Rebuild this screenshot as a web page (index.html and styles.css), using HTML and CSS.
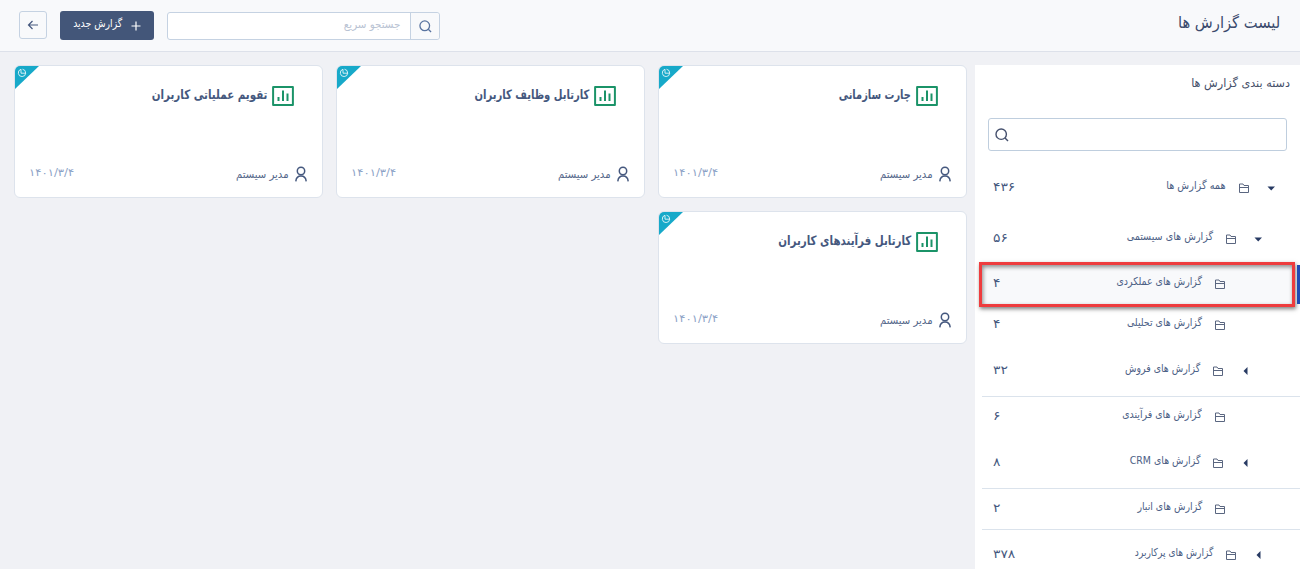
FILE: index.html
```html
<!DOCTYPE html>
<html lang="fa" dir="rtl">
<head>
<meta charset="utf-8">
<title>لیست گزارش ها</title>
<link rel="stylesheet" href="styles.css">
</head>
<body>
<svg width="0" height="0" class="defs">
  <symbol id="folder" viewBox="0 0 10 10"><path d="M.5 9.500V1h3.500l1 1.500h4.500v7zM.5 4.500h9" fill="none" stroke="currentColor" stroke-width="1"/></symbol>
  <symbol id="search" viewBox="0 0 14 14"><circle cx="6.2" cy="6.2" r="5.2" fill="none" stroke="currentColor" stroke-width="1.4"/><path d="M10 10l3 3" stroke="currentColor" stroke-width="1.4"/></symbol>
  <symbol id="down" viewBox="0 0 10 10"><path d="M1.500 3.500h7.500L5.200 7.500z" fill="currentColor"/></symbol>
  <symbol id="left" viewBox="0 0 10 10"><path d="M7.500 1v8L3.500 5z" fill="currentColor"/></symbol>
  <symbol id="chart" viewBox="0 0 22 20"><path d="M1.100 1.100h19.800v17.800H1.100z" fill="none" stroke="currentColor" stroke-width="2" stroke-linejoin="round"/><path d="M6.500 11v4M11 4.500v10.500M15.500 7.500v7.500" stroke="currentColor" stroke-width="2"/></symbol>
  <symbol id="user" viewBox="0 0 12 16"><circle cx="6" cy="5" r="3.700" fill="none" stroke="currentColor" stroke-width="1.500"/><path d="M.8 15.300C1.200 11.500 3.200 10 6 10s4.800 1.500 5.200 5.300" fill="none" stroke="currentColor" stroke-width="1.500"/></symbol>
  <symbol id="pie" viewBox="0 0 10 10"><path d="M4 1.300A3.700 3.700 0 1 0 8.700 5.200M4 1.300V5.200H8.700A3.900 3.900 0 0 0 5.500 1.200" fill="none" stroke="currentColor" stroke-width=".8"/></symbol>
</svg>
<header class="topbar">
  <h1 class="title">لیست گزارش ها</h1>
  <div class="tools">
    <div class="quick"><span class="quick-btn"><svg width="13" height="13"><use href="#search"/></svg></span><span class="quick-text">جستجو سریع</span></div>
    <div class="new"><svg width="10" height="10" viewBox="0 0 10 10"><path d="M5 .5v9M.5 5h9" stroke="#fff" stroke-width="1.200"/></svg><span>گزارش جدید</span></div>
    <div class="back"><svg width="12" height="10" viewBox="0 0 12 10"><path d="M11 5H1.500M5.500 1l-4 4 4 4" fill="none" stroke="currentColor" stroke-width="1.200"/></svg></div>
  </div>
</header>
<div class="main">
  <aside class="side">
    <h2 class="side-title">دسته بندی گزارش ها</h2>
    <div class="side-search"><svg width="14" height="14"><use href="#search"/></svg></div>
    <div class="tree">
      <div class="row tall l1"><svg class="caret"><use href="#down"/></svg><svg class="folder"><use href="#folder"/></svg><span class="name n1">همه گزارش ها</span><span class="count">۴۳۶</span></div>
      <div class="row tall l2"><svg class="caret"><use href="#down"/></svg><svg class="folder"><use href="#folder"/></svg><span class="name n2">گزارش های سیستمی</span><span class="count">۵۶</span></div>
      <div class="row leaf selected"><svg class="folder"><use href="#folder"/></svg><span class="name">گزارش های عملکردی</span><span class="count">۴</span><div class="marker"></div></div>
      <div class="row leaf"><svg class="folder"><use href="#folder"/></svg><span class="name">گزارش های تحلیلی</span><span class="count">۴</span></div>
      <div class="row mid l3 line"><svg class="caret"><use href="#left"/></svg><svg class="folder"><use href="#folder"/></svg><span class="name">گزارش های فروش</span><span class="count">۳۲</span></div>
      <div class="row leaf"><svg class="folder"><use href="#folder"/></svg><span class="name">گزارش های فرآیندی</span><span class="count">۶</span></div>
      <div class="row mid l3 line"><svg class="caret"><use href="#left"/></svg><svg class="folder"><use href="#folder"/></svg><span class="name">گزارش های CRM</span><span class="count">۸</span></div>
      <div class="row leaf line"><svg class="folder"><use href="#folder"/></svg><span class="name">گزارش های انبار</span><span class="count">۲</span></div>
      <div class="row last l2"><svg class="caret"><use href="#left"/></svg><svg class="folder"><use href="#folder"/></svg><span class="name n9">گزارش های پرکاربرد</span><span class="count">۳۷۸</span></div>
    </div>
  </aside>
  <main class="cards">
    <article class="card"><div class="corner"><svg width="10" height="10"><use href="#pie"/></svg></div><div class="head"><svg width="22" height="20"><use href="#chart"/></svg><h3 class="c1">چارت سازمانی</h3></div><div class="foot"><svg width="12" height="16"><use href="#user"/></svg><span class="owner">مدیر سیستم</span><span class="date">۱۴۰۱/۳/۴</span></div></article>
    <article class="card"><div class="corner"><svg width="10" height="10"><use href="#pie"/></svg></div><div class="head"><svg width="22" height="20"><use href="#chart"/></svg><h3 class="c2">کارتابل وظایف کاربران</h3></div><div class="foot"><svg width="12" height="16"><use href="#user"/></svg><span class="owner">مدیر سیستم</span><span class="date">۱۴۰۱/۳/۴</span></div></article>
    <article class="card"><div class="corner"><svg width="10" height="10"><use href="#pie"/></svg></div><div class="head"><svg width="22" height="20"><use href="#chart"/></svg><h3 class="c3">تقویم عملیاتی کاربران</h3></div><div class="foot"><svg width="12" height="16"><use href="#user"/></svg><span class="owner">مدیر سیستم</span><span class="date">۱۴۰۱/۳/۴</span></div></article>
    <article class="card"><div class="corner"><svg width="10" height="10"><use href="#pie"/></svg></div><div class="head"><svg width="22" height="20"><use href="#chart"/></svg><h3 class="c4">کارتابل فرآیندهای کاربران</h3></div><div class="foot"><svg width="12" height="16"><use href="#user"/></svg><span class="owner">مدیر سیستم</span><span class="date">۱۴۰۱/۳/۴</span></div></article>
  </main>
</div>
</body>
</html>
```
FILE: styles.css
```css
*, *::before { box-sizing: border-box; margin: 0; }
body { width: 1300px; height: 569px; overflow: hidden; background: #f0f1f5; color: #45587e; font-family: "DejaVu Sans Condensed", "DejaVu Sans", sans-serif; font-stretch: condensed; font-size: 11px; }
svg { display: block; flex: none; }
.defs { position: absolute; }
span, h1, h2, h3 { white-space: nowrap; transform-origin: right center; }
.topbar { height: 52px; background: #f8f9fb; border-bottom: 1px solid #dde1ea; display: flex; justify-content: space-between; padding: 0 20px 0 19px; }
.title { font-size: 16px; font-weight: 400; line-height: 46px; color: #3b4b6d; transform: scaleX(1.02); }
.tools { display: flex; align-items: flex-start; padding-top: 11px; }
.quick { display: flex; width: 273px; height: 28px; margin-top: 1px; border: 1px solid #c5d2e2; border-radius: 3px; background: #fff; }
.quick-btn { width: 29px; background: #f8f9fb; border-left: 1px solid #c5d2e2; display: grid; place-items: center; color: #5873a0; border-radius: 0 3px 3px 0; }
.quick-text { color: #b9c3d3; line-height: 24px; margin-right: 10px; transform: scaleX(1.04); }
.new { width: 94px; height: 29px; margin: 0 13px; border-radius: 3px; background: #435679; color: #fff; display: flex; align-items: center; gap: 9px; padding-right: 13px; }
.new span { line-height: 26px; padding-bottom: 3px; transform: scaleX(.94); }
.back { width: 28px; height: 28px; border: 1px solid #c5d2e2; border-radius: 3px; display: grid; place-items: center; color: #45587e; }
.main { display: flex; padding-top: 13px; }
.side { width: 325px; height: 504px; background: #fff; flex: none; overflow: hidden; }
.side-title { font-size: 12px; font-weight: 400; line-height: 36px; height: 53px; margin-right: 10px; color: #46506a; transform: scaleX(1.04); }
.side-search { width: 299px; height: 33px; margin-right: 13px; border: 1px solid #bfcede; border-radius: 3px; display: flex; align-items: center; justify-content: flex-end; padding-left: 6px; color: #45506d; }
.tree { padding-top: 11px; }
.row { position: relative; display: flex; align-items: center; padding-left: 18px; }
.tall { height: 51px; }
.mid { height: 51px; padding-bottom: 2px; }
.last { height: 49px; }
.leaf { height: 41px; padding-right: 75px; padding-bottom: 2px; }
.l1 { padding-right: 24px; }
.l2 { padding-right: 37px; }
.l3 { padding-right: 50px; }
.line { background: linear-gradient(#dbe3ec, #dbe3ec) 7px 100% / 318px 1px no-repeat; }
.caret { width: 10px; height: 10px; margin-left: 17px; color: #273a63; }
.folder { width: 10px; height: 10px; margin-left: 13px; color: #5a6680; }
.name { padding-bottom: 4px; color: #4c6085; transform: scaleX(.95); }
.n1 { transform: scaleX(.98); }
.n2 { transform: scaleX(.97); }
.n9 { transform: scaleX(.92); }
.count { margin-right: auto; color: #45587e; font-size: 12px; transform: scaleX(1.28); transform-origin: left center; padding-bottom: 2px; }
.selected::before { content: ""; position: absolute; left: 4px; right: 5px; top: -2px; height: 45px; border: 3px solid #ee3c3e; background: #f8f9fb; box-shadow: 1px 2px 4px rgba(0,0,0,.5), inset 1px 2px 4px rgba(0,0,0,.45); }
.selected > * { position: relative; }
.selected .marker { position: absolute; right: 0; top: 1px; width: 3px; height: 39px; background: #1f4bb5; }
.cards { width: 975px; padding: 0 8px 0 14px; display: grid; grid-template-columns: repeat(3, 309px); grid-auto-rows: 133px; column-gap: 13px; row-gap: 13px; align-content: start; }
.card { position: relative; background: #fff; border: 1px solid #dde3ec; border-radius: 6px; display: flex; flex-direction: column; justify-content: space-between; overflow: hidden; }
.corner { position: absolute; left: 0; top: 0; width: 24px; height: 23px; background: #17a9c9; clip-path: polygon(0 0, 100% 0, 0 100%); color: #fff; padding: 2px 0 0 2px; direction: ltr; }
.head { display: flex; gap: 5px; padding: 20px 28px 0 0; color: #1b9368; }
.head h3 { font-size: 13px; line-height: 18px; color: #45587e; transform: scaleX(.88); }
.head .c1 { transform: scaleX(.84); }
.head .c2 { transform: scaleX(.855); }
.foot { display: flex; align-items: center; padding: 0 15px 15px 14px; color: #45587e; }
.owner { margin-right: 6px; color: #54678a; transform: scaleX(1.02); }
.date { margin-right: auto; color: #8ba2c6; font-size: 10px; transform: scaleX(1.29); transform-origin: left center; padding-bottom: 3px; }
```
